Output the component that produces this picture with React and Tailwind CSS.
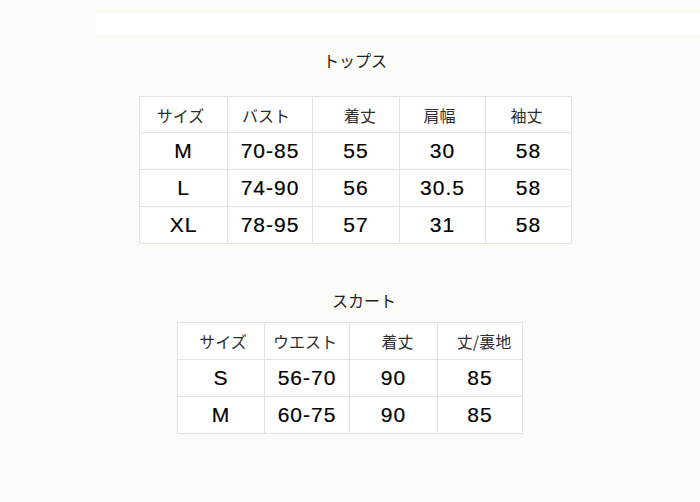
import React from "react";

const jp = { fontFamily: '"Noto Sans CJK JP", "Noto Sans", sans-serif' };
const num = { fontFamily: '"Liberation Sans", Arial, sans-serif' };

function Table({ cols, rowHeights, header, headerPad, rows }) {
  return (
    <div
      className="grid gap-px bg-[#e3e3e3] p-px w-max"
      style={{ gridTemplateColumns: cols.map((c) => c + "px").join(" "), gridTemplateRows: rowHeights.map((r) => r + "px").join(" ") }}
    >
      {header.map((h, i) => (
        <div key={"h" + i} className={"bg-white flex items-center justify-center text-[16px] text-[#2e2e2e] " + headerPad[i]} style={jp}>
          {h}
        </div>
      ))}
      {rows.map((r, ri) =>
        r.map((c, ci) => (
          <div key={ri + "-" + ci} className="bg-white flex items-center justify-center text-[21px] tracking-[1px] text-black [-webkit-text-stroke:0.2px_black]" style={num}>
            {c}
          </div>
        ))
      )}
    </div>
  );
}

export default function App() {
  return (
    <div className="w-[700px] h-[502px] bg-[#fbfbf7] overflow-hidden">
      <div className="h-[13px]" />
      <div className="ml-[96px] h-[22px] bg-white" />
      <div className="h-[13px]" />
      <div className="ml-[139px] w-[432px] flex justify-center">
        <div className="h-[24px] leading-[24px] text-[16px] text-[#222]" style={jp}>トップス</div>
      </div>
      <div className="h-[24px]" />
      <div className="ml-[139px]">
        <Table
          cols={[87, 84, 86, 85, 85]}
          rowHeights={[35, 36, 36, 36]}
          header={["サイズ", "バスト", "着丈", "肩幅", "袖丈"]}
          headerPad={["pr-[6px]", "pr-[8px]", "pl-[8px]", "pr-[6px]", "pr-[4px]"]}
          rows={[
            ["M", "70-85", "55", "30", "58"],
            ["L", "74-90", "56", "30.5", "58"],
            ["XL", "78-95", "57", "31", "58"],
          ]}
        />
      </div>
      <div className="h-[44px]" />
      <div className="ml-[332px] h-[24px] leading-[24px] text-[16px] text-[#222]" style={jp}>スカート</div>
      <div className="h-[10px]" />
      <div className="ml-[177px]">
        <Table
          cols={[86, 84, 87, 84]}
          rowHeights={[36, 36, 36]}
          header={["サイズ", "ウエスト", "着丈", "丈/裏地"]}
          headerPad={["pl-[4px]", "pr-[4px]", "pl-[8px]", "pl-[8px]"]}
          rows={[
            ["S", "56-70", "90", "85"],
            ["M", "60-75", "90", "85"],
          ]}
        />
      </div>
    </div>
  );
}
